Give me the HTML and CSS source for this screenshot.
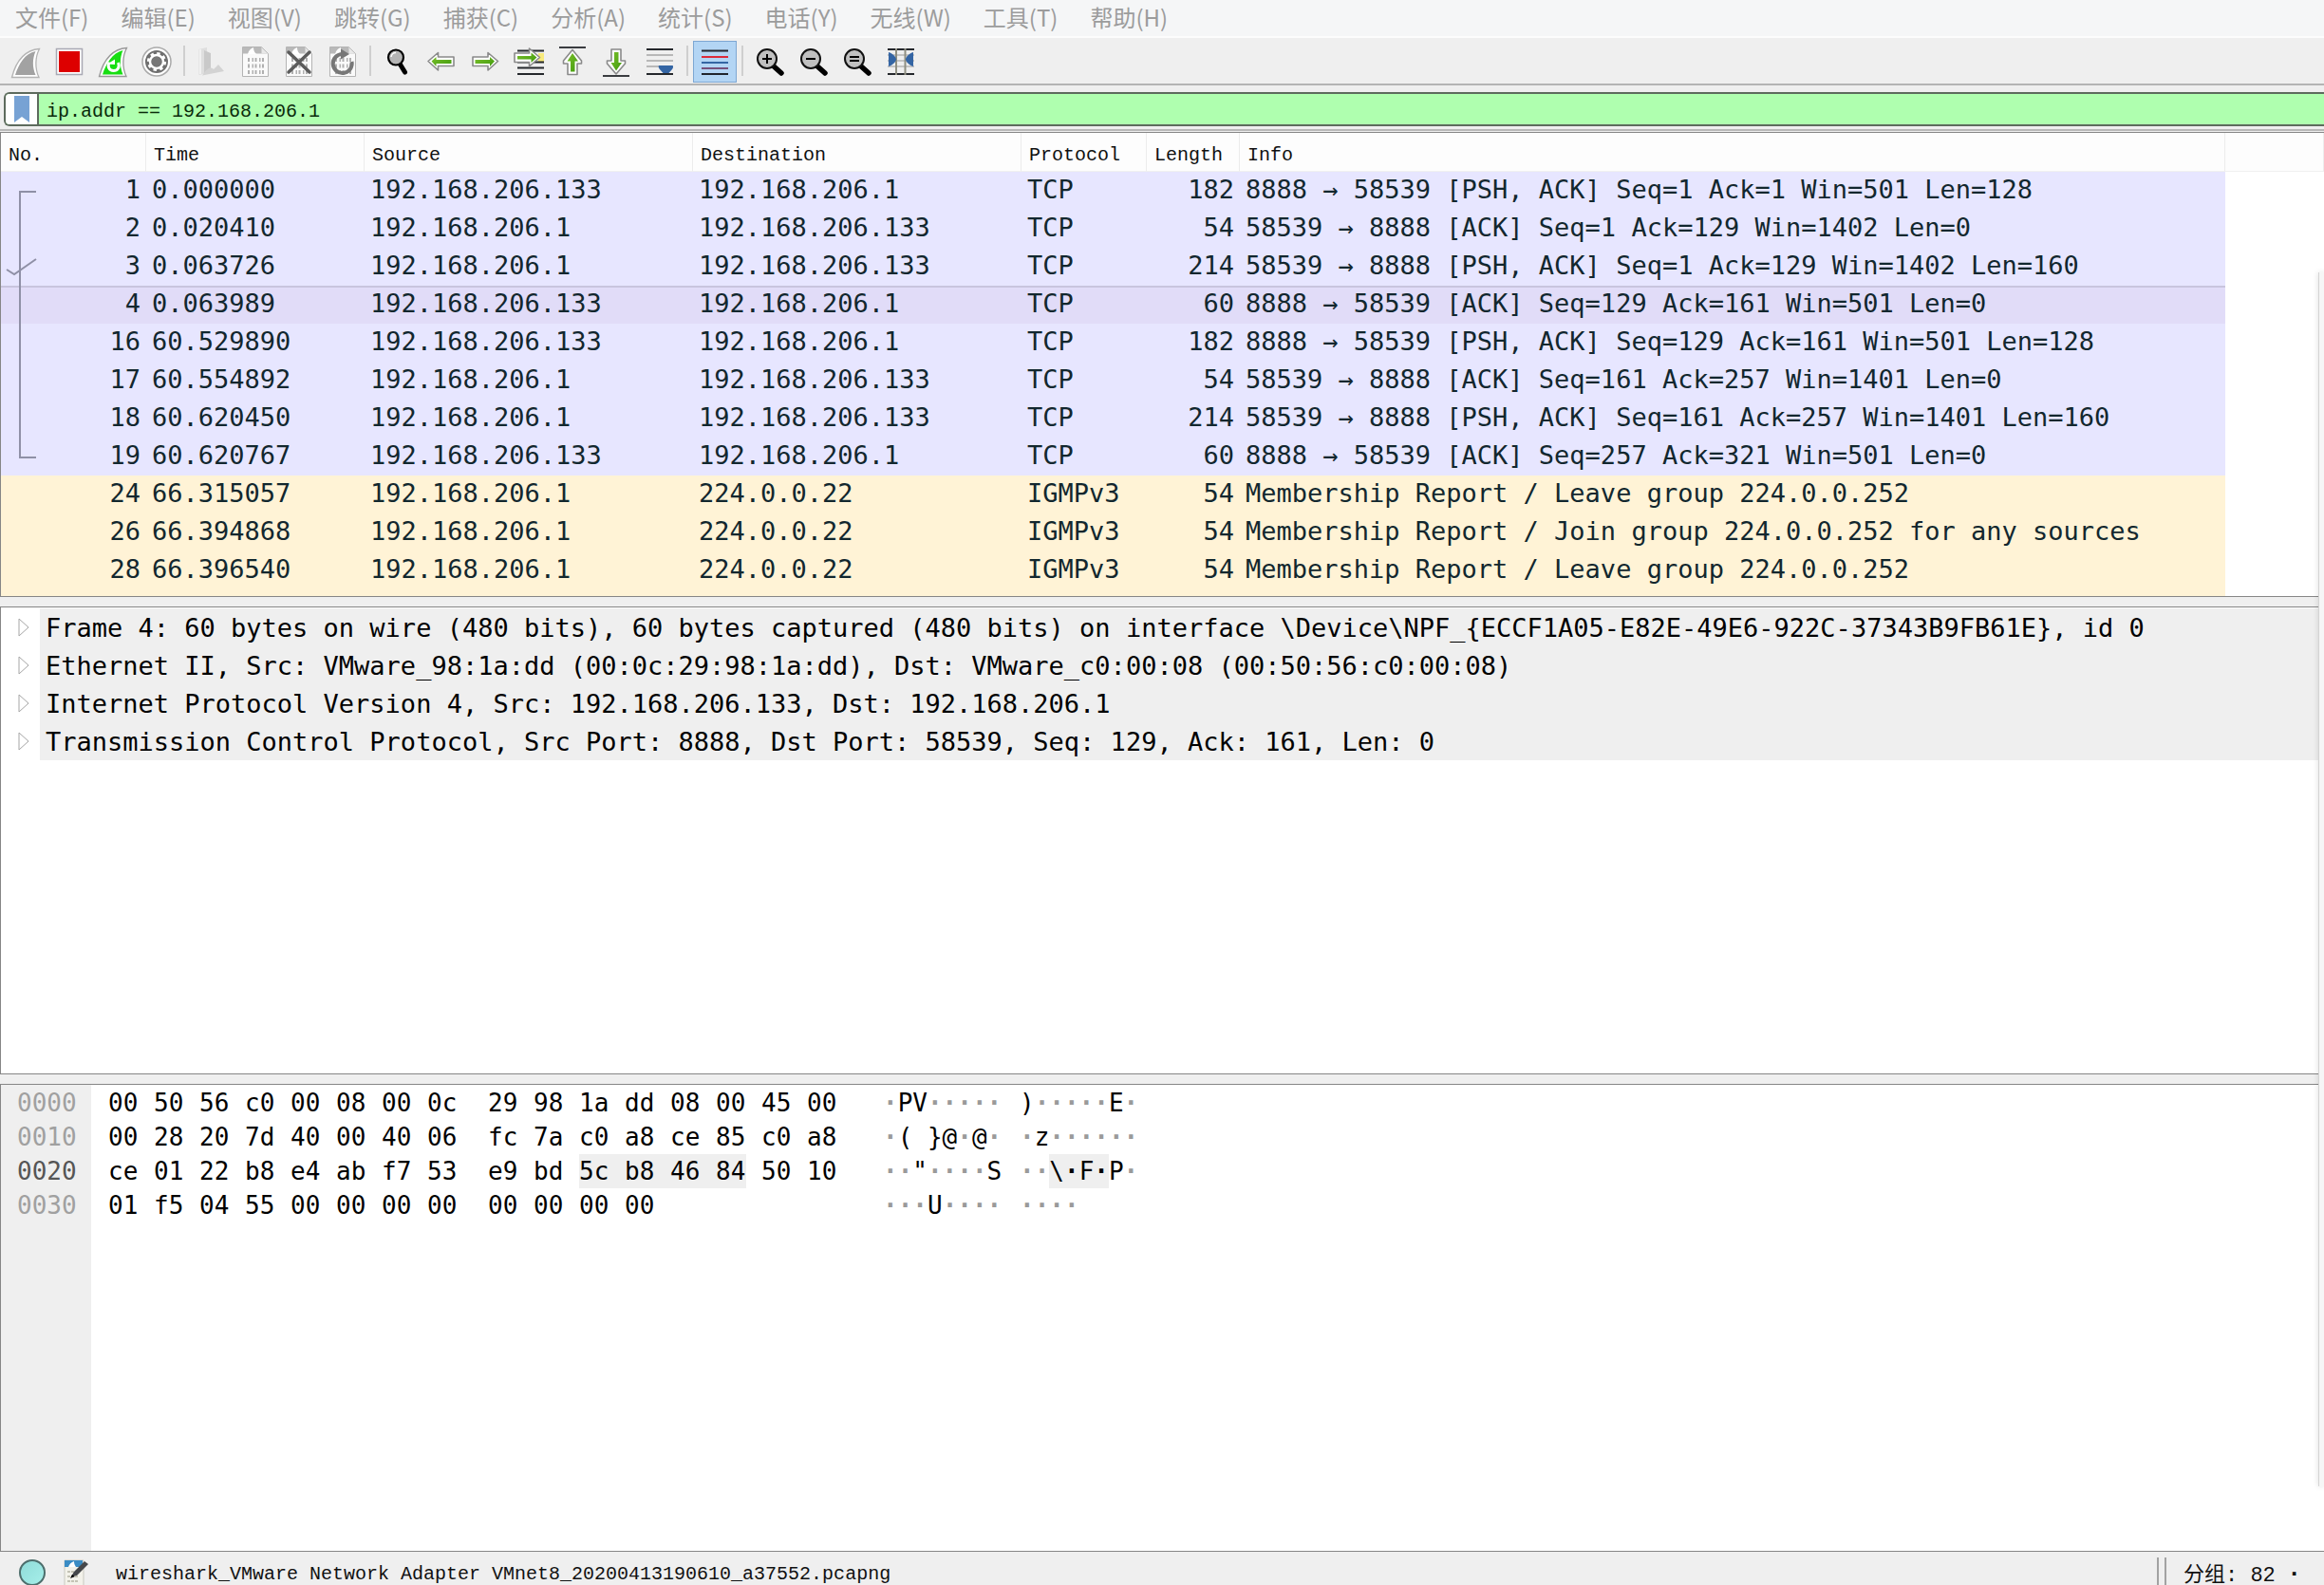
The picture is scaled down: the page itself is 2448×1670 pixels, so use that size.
FILE: index.html
```html
<!DOCTYPE html>
<html lang="zh-CN">
<head>
<meta charset="utf-8">
<title>Wireshark</title>
<link rel="stylesheet" href="styles.css">
</head>
<body>
<svg class="defs" aria-hidden="true">
  <defs>
    <linearGradient id="green" x1="0" y1="0" x2="1" y2="1"><stop offset="0" stop-color="#7cc02c"/><stop offset="1" stop-color="#3f9a0c"/></linearGradient>
    <linearGradient id="aqua" x1="0" y1="0" x2="1" y2="1"><stop offset="0" stop-color="#8fdcd8"/><stop offset="1" stop-color="#a6efea"/></linearGradient>
    <g id="page">
      <path d="M2.500.5h20l7 7v24h-27z" fill="#fafafa" stroke="#b4b4b4"/>
      <path d="M3 1h19.500l6.500 6.500H3z" fill="#b9b9b9"/>
      <path d="M8 8c1-4 3-6 6-7 0 3 1 5 3 7z" fill="#fff"/>
      <path d="M22.500 1v6.500H29z" fill="#e8e8e8"/>
      <path d="M8 14h17M8 20.500h17M8 27h17" stroke="#b0b0b0" stroke-width="4" stroke-dasharray="2 2.500 1.500 1.500"/>
    </g>
    <g id="lens">
      <path d="M18.500 19.500L28 28" stroke="#000" stroke-width="5.500" stroke-linecap="round"/>
      <circle cx="13" cy="13" r="10" fill="#c0c0c0" stroke="#111" stroke-width="2"/>
    </g>
  </defs>
</svg>
<div class="app">
  <nav class="menubar" aria-label="菜单">
    <button>文件(F)</button><button>编辑(E)</button><button>视图(V)</button><button>跳转(G)</button><button>捕获(C)</button><button>分析(A)</button><button>统计(S)</button><button>电话(Y)</button><button>无线(W)</button><button>工具(T)</button><button>帮助(H)</button>
  </nav>

  <div class="toolbar" role="toolbar">
    <button class="tool" aria-label="开始捕获"><svg viewBox="0 0 32 32"><path d="M1.500 32.500C5 19 12 4 30.500 2.500 26 11 25.500 23 30 32.500z" fill="#fff" stroke="#b4b4b4" stroke-width="1.300"/><path d="M5 30C9 18 15 7.500 26.500 5 23 13 23 22 26.500 30z" fill="#a2a2a2"/></svg></button>
    <button class="tool" aria-label="停止捕获"><svg viewBox="0 0 32 32"><path d="M2.500 2.500h27v27h-27z" fill="#fff" stroke="#a9a9b4" stroke-width="1.500"/><path d="M5 5h22v22H5z" fill="#dd0000"/></svg></button>
    <button class="tool" aria-label="重新开始捕获"><svg viewBox="0 0 32 32"><path d="M1.500 31.500C5 18 12 3 30.500 1.500 26 10 25.500 22 30 31.500z" fill="#fff" stroke="#999" stroke-width="1.300"/><path d="M5 29.500C9 17.500 15 7 26.500 4 23 12 23 21 26.500 29.500z" fill="#17de12"/><path d="M12 16.500c-2 5 0 9 4.500 9s7-4 5-8.500" fill="none" stroke="#fff" stroke-width="3"/><path d="M10 18.500l8-5v5.500z" fill="#fff"/></svg></button>
    <button class="tool" aria-label="捕获选项"><svg viewBox="0 0 32 32"><circle cx="16" cy="16" r="15" fill="#fff" stroke="#aaa" stroke-width="1.500"/><circle cx="16" cy="16" r="12" fill="#6f6f6f"/><circle cx="16" cy="16" r="7" fill="none" stroke="#fff" stroke-width="2.500"/><circle cx="16" cy="16" r="8.800" fill="none" stroke="#fff" stroke-width="2.600" stroke-dasharray="3.400 3.510"/><circle cx="16" cy="16" r="5" fill="#777"/></svg></button>
    <span class="sep"></span>
    <button class="tool" aria-label="打开"><svg viewBox="0 0 32 32"><path d="M2.500 3L11 1v27l-8.500 2z" fill="#dedede"/><path d="M8 4l7 3v20l-7 2z" fill="#c9c9c9"/><path d="M6 30.500C10 25 13 20 18 24l5-5 6 7z" fill="#d3d3d3"/><path d="M4 3v26" stroke="#f5f5f5" stroke-width="1.500"/></svg></button>
    <button class="tool" aria-label="保存"><svg viewBox="0 0 32 32"><use href="#page"/></svg></button>
    <button class="tool" aria-label="关闭"><svg viewBox="0 0 32 32"><use href="#page"/><path d="M5 6l22 21M27 6L5 27" stroke="#5b5b5b" stroke-width="3.500" stroke-linecap="round"/></svg></button>
    <button class="tool" aria-label="重新载入"><svg viewBox="0 0 32 32"><use href="#page"/><path d="M16 8a10 10 0 1 0 9.500 8" fill="none" stroke="#777" stroke-width="4"/><path d="M14 2.500l9 5.500-9 5.500z" fill="#777"/></svg></button>
    <span class="sep"></span>
    <button class="tool" aria-label="查找分组"><svg viewBox="0 0 32 32"><path d="M18 18l5.500 9" stroke="#000" stroke-width="5" stroke-linecap="round"/><circle cx="14" cy="11.500" r="8" fill="#b5b5b5" stroke="#000" stroke-width="2.200"/><path d="M9 11a5 5 0 0 1 5-4.500" fill="none" stroke="#fff" stroke-width="1.500"/></svg></button>
    <button class="tool" aria-label="上一分组"><svg viewBox="0 0 32 32"><path d="M2 15.500L12.500 6.500v4.500H29v9.500H12.500V25z" fill="#fff" stroke="#8a8a8a" stroke-width="1.600" stroke-linejoin="round"/><path d="M5.500 15.500l5-4.500v3H26.500v4H10.500v3z" fill="url(#green)"/></svg></button>
    <button class="tool" aria-label="下一分组"><svg viewBox="0 0 32 32"><path d="M29.500 15.500L19 6.500v4.500H3v9.500h16V25z" fill="#fff" stroke="#8a8a8a" stroke-width="1.600" stroke-linejoin="round"/><path d="M26 15.500L21 11v3H5.500v4H21v3z" fill="url(#green)"/></svg></button>
    <button class="tool" aria-label="转到分组"><svg viewBox="0 0 32 32"><path d="M26 7h6v9h-6z" fill="#f8ea7c"/><path d="M4 4.500h28M4 16.500h28M4 22.500h28M4 29h28" stroke="#25282c" stroke-width="2"/><path d="M27.500 11.500L16.500 2v5H1v9.500h15.500V21z" fill="#fff" stroke="#8a8a8a" stroke-width="1.600" stroke-linejoin="round"/><path d="M24.500 11.500l-6-5v3.500H4v3.500h14.500V17z" fill="url(#green)"/></svg></button>
    <button class="tool" aria-label="首个分组"><svg viewBox="0 0 32 32"><path d="M2 1h28" stroke="#3a3c40" stroke-width="2"/><path d="M16 3.500L6.500 15v3H11v11.500h10V18h4.500v-3z" fill="#fff" stroke="#8a8a8a" stroke-width="1.600" stroke-linejoin="round"/><path d="M16 7l-5.500 8.500H14v11h4.500v-11h3.500z" fill="url(#green)"/></svg></button>
    <button class="tool" aria-label="最新分组"><svg viewBox="0 0 32 32"><path d="M2 31h28" stroke="#3a3c40" stroke-width="2"/><path d="M16 29L6.500 18v-3H11V3h10v12h4.500v3z" fill="#fff" stroke="#8a8a8a" stroke-width="1.600" stroke-linejoin="round"/><path d="M16 25.500L10.500 17H14V6h4.500v11h3.500z" fill="url(#green)"/></svg></button>
    <button class="tool" aria-label="自动滚动"><svg viewBox="0 0 32 32"><path d="M2 9h28M2 15h28M2 21h28" stroke="#b8b8b8" stroke-width="2"/><path d="M2 3h28M2 29h28" stroke="#25282c" stroke-width="2"/><path d="M15 20h14.500c2 3-2 5-4 8h-6c-2-3-6-5-4.500-8z" fill="#3465a4"/></svg></button>
    <span class="sep"></span>
    <button class="tool tool-on" aria-label="着色分组列表" aria-pressed="true"><svg viewBox="0 0 32 32"><path d="M2 4.500h28M2 29h28" stroke="#20242c" stroke-width="2"/><path d="M2 11h28" stroke="#dc2a3a" stroke-width="2"/><path d="M2 17h28" stroke="#3465a4" stroke-width="2"/><path d="M2 23h28" stroke="#75507b" stroke-width="2"/></svg></button>
    <span class="sep"></span>
    <button class="tool" aria-label="放大"><svg viewBox="0 0 32 32"><use href="#lens"/><path d="M8 13h10M13 8v10" stroke="#000" stroke-width="2"/></svg></button>
    <button class="tool" aria-label="缩小"><svg viewBox="0 0 32 32"><use href="#lens"/><path d="M8 13h10" stroke="#000" stroke-width="2"/></svg></button>
    <button class="tool" aria-label="正常大小"><svg viewBox="0 0 32 32"><use href="#lens"/><path d="M8 11h10M8 15h10" stroke="#000" stroke-width="2"/></svg></button>
    <button class="tool" aria-label="调整列宽"><svg viewBox="0 0 32 32"><path d="M2 9h28M2 15h28M2 21h28" stroke="#c4c4c4" stroke-width="2"/><path d="M2 3h28M2 29h28" stroke="#25282c" stroke-width="2"/><path d="M11 2v28M20.500 2v28" stroke="#8f8f82" stroke-width="2"/><path d="M3 6c4 1 8 5 8 7.500S7 20 3 21zM29 6c-4 1-8 5-8 7.500s4 6.500 8 7.500z" fill="#3465a4"/></svg></button>
  </div>

  <form class="filterbar">
    <div class="filterbox">
      <button type="button" class="bookmark" aria-label="书签"><svg viewBox="0 0 16 28"><path d="M0 0h16v28l-8-6-8 6z" fill="#77a2d4"/></svg></button>
      <input class="filter" type="text" aria-label="显示过滤器" value="ip.addr == 192.168.206.1" spellcheck="false">
    </div>
  </form>

  <main class="panes">
    <section class="pane packets">
      <table class="packet-table">
        <colgroup><col class="c-no"><col class="c-time"><col class="c-addr"><col class="c-addr"><col class="c-proto"><col class="c-len"><col><col class="c-rest"></colgroup>
        <thead><tr><th>No.</th><th>Time</th><th>Source</th><th>Destination</th><th>Protocol</th><th>Length</th><th>Info</th><th></th></tr></thead>
        <tbody>
          <tr class="tcp"><td class="num">1</td><td>0.000000</td><td>192.168.206.133</td><td>192.168.206.1</td><td>TCP</td><td class="num">182</td><td>8888 → 58539 [PSH, ACK] Seq=1 Ack=1 Win=501 Len=128</td><td></td></tr>
          <tr class="tcp"><td class="num">2</td><td>0.020410</td><td>192.168.206.1</td><td>192.168.206.133</td><td>TCP</td><td class="num">54</td><td>58539 → 8888 [ACK] Seq=1 Ack=129 Win=1402 Len=0</td><td></td></tr>
          <tr class="tcp"><td class="num">3</td><td>0.063726</td><td>192.168.206.1</td><td>192.168.206.133</td><td>TCP</td><td class="num">214</td><td>58539 → 8888 [PSH, ACK] Seq=1 Ack=129 Win=1402 Len=160</td><td></td></tr>
          <tr class="tcp selected"><td class="num">4</td><td>0.063989</td><td>192.168.206.133</td><td>192.168.206.1</td><td>TCP</td><td class="num">60</td><td>8888 → 58539 [ACK] Seq=129 Ack=161 Win=501 Len=0</td><td></td></tr>
          <tr class="tcp"><td class="num">16</td><td>60.529890</td><td>192.168.206.133</td><td>192.168.206.1</td><td>TCP</td><td class="num">182</td><td>8888 → 58539 [PSH, ACK] Seq=129 Ack=161 Win=501 Len=128</td><td></td></tr>
          <tr class="tcp"><td class="num">17</td><td>60.554892</td><td>192.168.206.1</td><td>192.168.206.133</td><td>TCP</td><td class="num">54</td><td>58539 → 8888 [ACK] Seq=161 Ack=257 Win=1401 Len=0</td><td></td></tr>
          <tr class="tcp"><td class="num">18</td><td>60.620450</td><td>192.168.206.1</td><td>192.168.206.133</td><td>TCP</td><td class="num">214</td><td>58539 → 8888 [PSH, ACK] Seq=161 Ack=257 Win=1401 Len=160</td><td></td></tr>
          <tr class="tcp"><td class="num">19</td><td>60.620767</td><td>192.168.206.133</td><td>192.168.206.1</td><td>TCP</td><td class="num">60</td><td>8888 → 58539 [ACK] Seq=257 Ack=321 Win=501 Len=0</td><td></td></tr>
          <tr class="igmp"><td class="num">24</td><td>66.315057</td><td>192.168.206.1</td><td>224.0.0.22</td><td>IGMPv3</td><td class="num">54</td><td>Membership Report / Leave group 224.0.0.252</td><td></td></tr>
          <tr class="igmp"><td class="num">26</td><td>66.394868</td><td>192.168.206.1</td><td>224.0.0.22</td><td>IGMPv3</td><td class="num">54</td><td>Membership Report / Join group 224.0.0.252 for any sources</td><td></td></tr>
          <tr class="igmp"><td class="num">28</td><td>66.396540</td><td>192.168.206.1</td><td>224.0.0.22</td><td>IGMPv3</td><td class="num">54</td><td>Membership Report / Leave group 224.0.0.252</td><td></td></tr>
          <tr class="igmp cut"><td></td><td></td><td></td><td></td><td></td><td></td><td></td><td></td></tr>
        </tbody>
      </table>
      <svg class="related" viewBox="0 0 40 320" aria-hidden="true"><path d="M37 21H20v280h17M6 103l8 5 23-16" fill="none" stroke="#8f90a6" stroke-width="2"/></svg>
    </section>

    <section class="pane details">
      <ul class="tree">
        <li><button class="twisty" aria-label="展开"><svg viewBox="0 0 12 20"><path d="M1 1l10 9-10 9z"/></svg></button><span>Frame 4: 60 bytes on wire (480 bits), 60 bytes captured (480 bits) on interface \Device\NPF_{ECCF1A05-E82E-49E6-922C-37343B9FB61E}, id 0</span></li>
        <li><button class="twisty" aria-label="展开"><svg viewBox="0 0 12 20"><path d="M1 1l10 9-10 9z"/></svg></button><span>Ethernet II, Src: VMware_98:1a:dd (00:0c:29:98:1a:dd), Dst: VMware_c0:00:08 (00:50:56:c0:00:08)</span></li>
        <li><button class="twisty" aria-label="展开"><svg viewBox="0 0 12 20"><path d="M1 1l10 9-10 9z"/></svg></button><span>Internet Protocol Version 4, Src: 192.168.206.133, Dst: 192.168.206.1</span></li>
        <li><button class="twisty" aria-label="展开"><svg viewBox="0 0 12 20"><path d="M1 1l10 9-10 9z"/></svg></button><span>Transmission Control Protocol, Src Port: 8888, Dst Port: 58539, Seq: 129, Ack: 161, Len: 0</span></li>
      </ul>
    </section>

    <section class="pane bytes">
      <table class="hex">
        <tr><th>0000</th><td>00</td><td>50</td><td>56</td><td>c0</td><td>00</td><td>08</td><td>00</td><td class="half">0c</td><td>29</td><td>98</td><td>1a</td><td>dd</td><td>08</td><td>00</td><td>45</td><td class="last">00</td><td class="ascii"><i>·</i>PV<i>·····</i></td><td class="ascii">)<i>·····</i>E<i>·</i></td></tr>
        <tr><th>0010</th><td>00</td><td>28</td><td>20</td><td>7d</td><td>40</td><td>00</td><td>40</td><td class="half">06</td><td>fc</td><td>7a</td><td>c0</td><td>a8</td><td>ce</td><td>85</td><td>c0</td><td class="last">a8</td><td class="ascii"><i>·</i>( }@<i>·</i>@<i>·</i></td><td class="ascii"><i>·</i>z<i>······</i></td></tr>
        <tr><th class="current">0020</th><td>ce</td><td>01</td><td>22</td><td>b8</td><td>e4</td><td>ab</td><td>f7</td><td class="half">53</td><td>e9</td><td>bd</td><td class="mark">5c</td><td class="mark">b8</td><td class="mark">46</td><td><span class="mark mark-end">84</span></td><td>50</td><td class="last">10</td><td class="ascii"><i>··</i>"<i>····</i>S</td><td class="ascii"><i>··</i><span class="mark">\<b>·</b>F<b>·</b></span>P<i>·</i></td></tr>
        <tr><th>0030</th><td>01</td><td>f5</td><td>04</td><td>55</td><td>00</td><td>00</td><td>00</td><td class="half">00</td><td>00</td><td>00</td><td>00</td><td>00</td><td></td><td></td><td></td><td class="last"></td><td class="ascii"><i>···</i>U<i>····</i></td><td class="ascii"><i>····</i></td></tr>
      </table>
    </section>
  </main>

  <footer class="statusbar">
    <button class="status-icon" aria-label="专家信息"><svg viewBox="0 0 28 28"><circle cx="14" cy="14" r="13" fill="url(#aqua)" stroke="#4d6e6c" stroke-width="2"/></svg></button>
    <button class="status-icon" aria-label="捕获文件注释"><svg viewBox="0 0 28 28"><path d="M2 1h20v28H2z" fill="#f3f2ea" stroke="#c9c9c0"/><path d="M2 1h19v7H2z" fill="#3a8cc4"/><path d="M6 8c1-3 3-5 6-6 0 3 1 4 2 6z" fill="#fff"/><path d="M5 13h12M5 18h12M5 23h12" stroke="#c4c3b5" stroke-width="2" stroke-dasharray="3 1"/><path d="M9 18l3-5L23 2l4 3-12 12z" fill="#45474a"/><path d="M8 20l2-4 3 2z" fill="#000"/></svg></button>
    <span class="filename">wireshark_VMware Network Adapter VMnet8_20200413190610_a37552.pcapng</span>
    <span class="counts">分组: 82 <b>·</b></span>
  </footer>
  <div class="drawer"></div>
</div>
</body>
</html>
```
FILE: styles.css
```css
* { box-sizing: border-box; }
body { margin: 0; background: #efefef; }
button { border: 0; padding: 0; background: none; font: inherit; color: inherit; }
.defs { position: absolute; width: 0; height: 0; }

.app {
  position: relative;
  display: flex;
  flex-direction: column;
  height: 100vh;
  overflow: hidden;
  font: 20px/24px "Liberation Mono", "Noto Sans CJK SC", monospace;
  color: #111;
}

/* Menu */
.menubar {
  display: flex;
  gap: 34px;
  padding: 0 16px;
  height: 40px;
  background: #f5f6f7;
  border-bottom: 2px solid #fcfcfc;
  font: 24px/36px "Noto Sans CJK SC", sans-serif;
  color: #9c9c9c;
}
.menubar button { height: 36px; white-space: nowrap; }

/* Toolbar */
.toolbar {
  display: flex;
  height: 50px;
  padding: 3px 4px;
  background: #efefef;
  border-bottom: 2px solid #b4b4b4;
}
.tool {
  display: grid;
  place-items: center;
  width: 46px;
  height: 44px;
}
.tool svg { width: 32px; height: 32px; overflow: visible; }
.tool-on { background: #b3d5f4; border: 1px solid #7da7d3; }
.sep { width: 12px; padding: 5px 5px 7px; }
.sep::before { content: ""; display: block; width: 2px; height: 32px; background: #cfcfcf; }

/* Display filter */
.filterbar {
  margin: 0;
  padding: 7px 0 3px 4px;
  border-bottom: 2px solid #b8b8b8;
}
.filterbox {
  display: flex;
  height: 36px;
  border: 2px solid #5d6b5d;
  border-right: 0;
  border-radius: 6px 0 0 6px;
  background: #afffaf;
  overflow: hidden;
}
.bookmark {
  display: grid;
  place-items: center;
  width: 35px;
  background: #fff;
  border-right: 2px solid #5d6b5d;
}
.bookmark svg { width: 16px; height: 28px; }
.filter {
  flex: 1;
  min-width: 0;
  border: 0;
  outline: 0;
  padding: 6px 8px 0;
  background: transparent;
  font: inherit;
  color: #0a2a0a;
}

/* Panes */
.panes {
  flex: 1;
  min-height: 0;
  display: flex;
  flex-direction: column;
  gap: 10px;
  padding-top: 1px;
}
.pane {
  background: #fff;
  border: 1px solid #868686;
  border-right: 0;
  overflow: hidden;
}
.packets { position: relative; flex: none; }
.details, .bytes { flex: 1 1 0; min-height: 0; }

.packet-table {
  width: 100%;
  table-layout: fixed;
  border-collapse: separate;
  border-spacing: 0;
}
.c-no { width: 153px; }
.c-time { width: 230px; }
.c-addr { width: 346px; }
.c-proto { width: 132px; }
.c-len { width: 98px; }
.c-rest { width: 104px; }
.packet-table th {
  height: 41px;
  padding: 8px 8px 0;
  background: #fdfdfd;
  border-right: 1px solid #ececec;
  border-bottom: 1px solid #f0f0f0;
  font-weight: 400;
  line-height: 32px;
  text-align: left;
}
.packet-table td {
  height: 40px;
  padding: 0 6px 2px;
  font: 27px/38px "DejaVu Sans Mono", monospace;
  color: #12272e;
  white-space: nowrap;
}
.packet-table .num { text-align: right; }
.tcp td { background: #e7e6ff; }
.igmp td { background: #fff3d6; }
.packet-table .selected td { background: #e1dcf8; border-top: 2px solid #c8c5de; padding-bottom: 4px; line-height: 34px; }
.packet-table .cut td { height: 7px; padding: 0; }
.packet-table td:last-child, .packet-table .selected td:last-child { background: #fff; border: 0; }
.related { position: absolute; left: 0; top: 41px; width: 40px; height: 320px; }

/* Protocol tree */
.tree {
  list-style: none;
  margin: 0;
  padding: 1px 0 0;
  font: 27px/42px "DejaVu Sans Mono", monospace;
  color: #000;
}
.tree li { display: flex; height: 40px; white-space: nowrap; }
.tree span { flex: 1; padding-left: 6px; background: #efefef; }
.twisty { display: grid; place-items: center; width: 41px; padding-left: 6px; }
.twisty svg { width: 12px; height: 20px; fill: #fff; stroke: #a6a6a6; }

/* Packet bytes */
.bytes { background: linear-gradient(90deg, #efefef 95px, #fff 95px); }
.hex {
  margin-top: 1px;
  border-spacing: 0;
  font: 26px/36px "DejaVu Sans Mono", monospace;
  color: #000;
}
.hex td, .hex th { height: 36px; padding: 0; white-space: pre; text-align: left; font-weight: 400; }
.hex th { width: 113px; min-width: 113px; padding-left: 17px; color: #a0a0a0; }
.hex .current { color: #555; }
.hex td { min-width: 48px; }
.hex .half { min-width: 64px; }
.hex .last { min-width: 80px; }
.hex .ascii { min-width: 144px; }
.hex i { font-style: normal; font-weight: 700; color: #9a9a9a; }
.mark { background: #efefef; }
.hex span.mark { display: inline-block; height: 36px; }
.mark-end { width: 32px; }

/* Status bar */
.statusbar {
  display: flex;
  height: 35px;
  overflow: hidden;
  padding-left: 20px;
}
.status-icon { width: 28px; height: 28px; margin: 8px 18px 0 0; }
.status-icon svg { display: block; width: 28px; height: 28px; overflow: visible; }
.filename { flex: 1; padding: 12px 0 0 10px; line-height: 24px; white-space: nowrap; }
.counts {
  width: 176px;
  margin-top: 6px;
  padding: 6px 0 0 26px;
  border-left: 2px solid #a2a2a2;
  box-shadow: inset 6px 0 #efefef, inset 8px 0 #a2a2a2;
  line-height: 24px;
  font-size: 22px;
  white-space: nowrap;
}
.counts b { font-family: "DejaVu Sans Mono", monospace; }

/* Edge of the window docked at the right */
.drawer {
  position: absolute;
  right: 0;
  top: 287px;
  bottom: 104px;
  width: 6px;
  background: #f6f6f6;
  border-left: 1px solid #d4d4d4;
  box-shadow: 0 0 6px #0002;
}
```
